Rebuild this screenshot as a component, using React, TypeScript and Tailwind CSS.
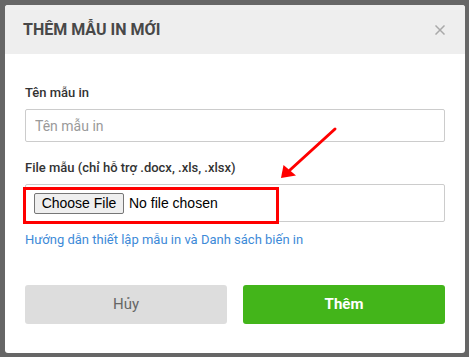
import React from 'react';

const sans = "font-['Roboto','Liberation_Sans',sans-serif]";

function CloseIcon() {
  return (
    <svg width="10" height="10" viewBox="0 0 10 10" className="block">
      <path d="M1 1 L9 9 M9 1 L1 9" stroke="#a9a9a9" strokeWidth="1.5" strokeLinecap="square" />
    </svg>
  );
}

// red annotation arrow drawn over the dialog
function Arrow() {
  return (
    <svg
      width="469"
      height="357"
      viewBox="0 0 469 357"
      className="pointer-events-none absolute left-0 top-0"
    >
      <path d="M335 129 L290 170" stroke="#ff0000" strokeWidth="3" strokeLinecap="round" />
      <path d="M281 178 L283.5 165 L296 175.5 Z" fill="#ff0000" />
    </svg>
  );
}

export default function App() {
  return (
    <div className={`relative h-[357px] w-[469px] overflow-hidden bg-[#666666] p-[5px] ${sans}`}>
      <div className="flex h-[348px] w-[460px] flex-col overflow-hidden rounded-[3px] bg-white">
        <div className="flex h-[49px] shrink-0 items-center justify-between bg-[#eeeeee] pl-[18px] pr-[20px]">
          <h1 className="text-[16px] font-bold text-[#484848]">THÊM MẪU IN MỚI</h1>
          <button type="button" className="mt-[1px]">
            <CloseIcon />
          </button>
        </div>

        <div className="flex flex-col px-[20px] pt-[30px]">
          <label className="text-[13px] leading-[18px] font-medium text-[#333333]">Tên mẫu in</label>
          <input
            placeholder="Tên mẫu in"
            className="mt-[7px] h-[33px] w-full rounded-[2px] border border-[#cccccc] px-[9px] text-[14px] text-[#333333] outline-none placeholder:text-[#9a9a9a]"
          />

          <label className="mt-[17px] text-[13px] leading-[18px] font-medium text-[#333333]">
            File mẫu (chỉ hỗ trợ .docx, .xls, .xlsx)
          </label>
          <div className="relative mt-[7px] flex h-[38px] w-full items-center rounded-[2px] border border-[#cccccc] pl-[8px] font-['Liberation_Sans',Arial,sans-serif] text-[14px] text-black">
            <span className="flex h-[21px] w-[90px] items-center justify-center rounded-[2px] border border-[#767676] bg-[#efefef]">
              Choose File
            </span>
            <span className="ml-[5px]">No file chosen</span>
            <div className="pointer-events-none absolute left-[-3px] top-[2px] h-[37px] w-[256px] border-[3px] border-[#ff0000]" />
          </div>

          <a href="#" className="mt-[9px] text-[13px] leading-[18px] text-[#3d8ad8]">
            Hướng dẫn thiết lập mẫu in và Danh sách biến in
          </a>

          <div className="mt-[36px] flex gap-[16px]">
            <button
              type="button"
              className="h-[39px] flex-1 rounded-[3px] bg-[#dddddd] text-[15px] text-[#666666]"
            >
              Hủy
            </button>
            <button
              type="button"
              className="h-[39px] flex-1 rounded-[3px] bg-[#43b51a] text-[15px] font-bold text-white"
            >
              Thêm
            </button>
          </div>
        </div>
      </div>
      <Arrow />
    </div>
  );
}
